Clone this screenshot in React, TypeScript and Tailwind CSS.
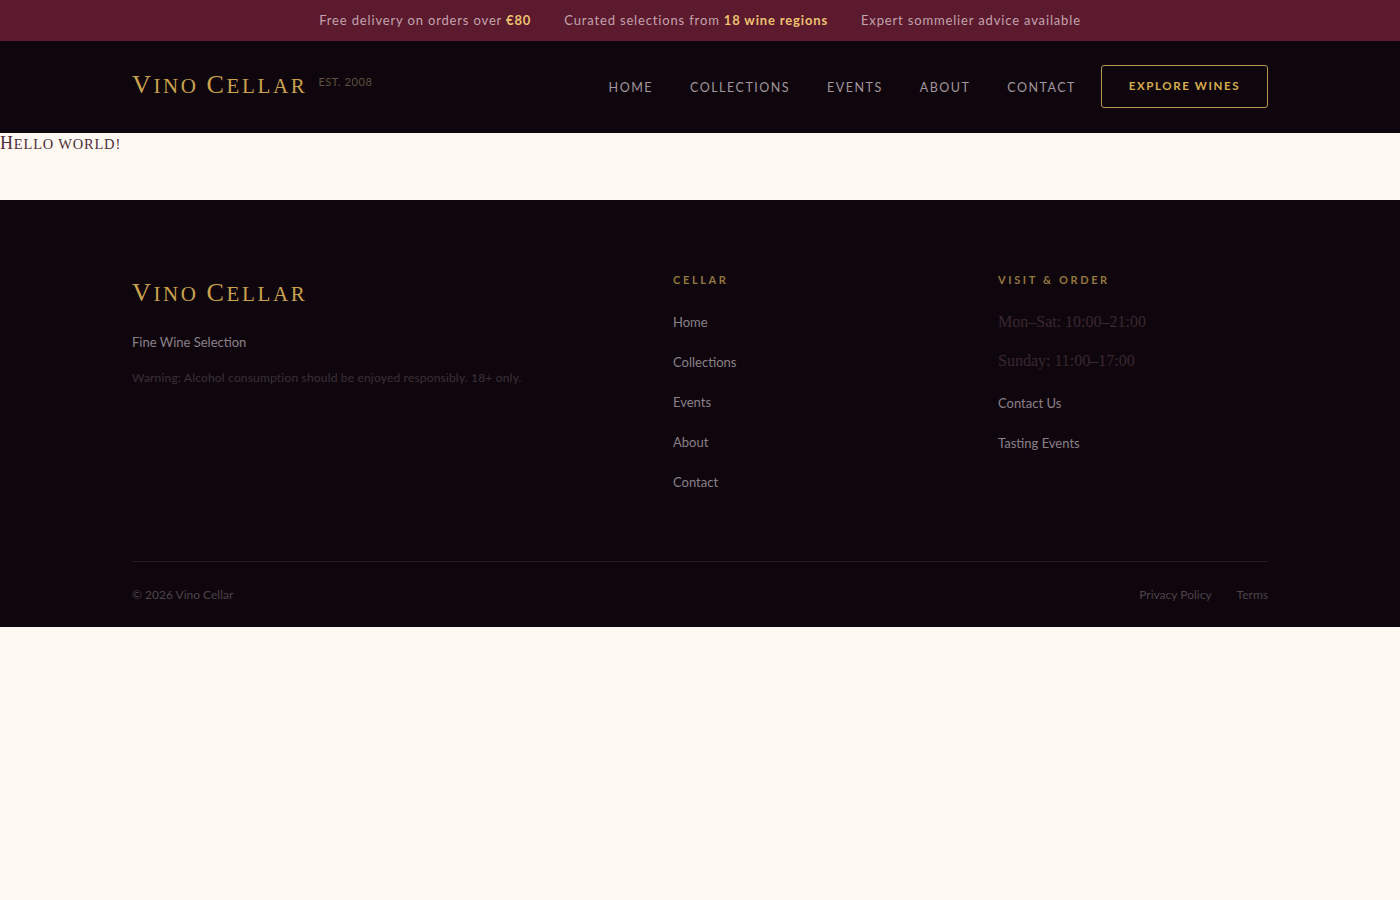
import React from "react";

const sans = { fontFamily: "Lato, 'Open Sans', sans-serif" };
const serif = { fontFamily: "'Liberation Serif', 'DejaVu Serif', serif" };

function Logo() {
  return (
    <span
      className="text-[#c9a24e] tracking-[0.165em] leading-none whitespace-nowrap"
      style={serif}
    >
      <span className="text-[26px]">V</span>
      <span className="text-[21px]">INO </span>
      <span className="text-[26px]">C</span>
      <span className="text-[21px]">ELLAR</span>
    </span>
  );
}

export default function App() {
  const navItems = ["HOME", "COLLECTIONS", "EVENTS", "ABOUT", "CONTACT"];
  return (
    <div className="min-h-[900px] bg-[#fdf8f2]" style={sans}>
      {/* Top bar */}
      <div className="h-[41px] bg-[#5b1a2e] flex items-center justify-center gap-[33px] text-[13px] tracking-[0.065em] text-[#c3a3ad] pt-[1px]">
        <span>
          Free delivery on orders over <b className="text-[#ecc171] font-bold">€80</b>
        </span>
        <span>
          Curated selections from <b className="text-[#ecc171] font-bold">18 wine regions</b>
        </span>
        <span>Expert sommelier advice available</span>
      </div>

      {/* Header */}
      <header className="bg-[#0f060d] h-[92px]">
        <div className="max-w-[1200px] mx-auto px-8 h-full flex items-center justify-between">
          <div className="flex items-start gap-[11px] -mt-[4px]">
            <Logo />
            <span className="text-[11px] tracking-[0.05em] text-[#5e5040] mt-[2px]">EST. 2008</span>
          </div>
          <div className="flex items-center">
            <nav className="flex items-center gap-[37px] text-[12.5px] tracking-[0.12em] text-[#a1969c] pt-[2px]">
              {navItems.map((n) => (
                <span key={n}>{n}</span>
              ))}
            </nav>
            <button className="ml-[25px] w-[167px] h-[43px] -mt-[2px] border border-[#b8954a] rounded-[3px] text-[#d6ae4f] text-[11.5px] font-bold tracking-[0.14em]">
              EXPLORE WINES
            </button>
          </div>
        </div>
      </header>

      {/* Main */}
      <main className="h-[67px] bg-[#fdf8f2]">
        <div className="text-[#4f2e3b] tracking-[0.05em] leading-none pt-[1px]" style={serif}>
          <span className="text-[18px]">H</span>
          <span className="text-[14.5px]">ELLO WORLD!</span>
        </div>
      </main>

      {/* Footer */}
      <footer className="bg-[#0f060d] h-[427px]">
        <div className="max-w-[1200px] mx-auto px-8">
          <div className="grid grid-cols-[485px_269px_1fr] gap-14 pt-[72px] h-[361px]">
            <div className="flex flex-col">
              <div className="mt-[8px]">
                <Logo />
              </div>
              <p className="mt-[25px] text-[13px] text-[#8b8088] leading-[20px]">Fine Wine Selection</p>
              <p className="mt-[18px] text-[12px] tracking-[0.015em] text-[#3b3036] leading-[16px]">
                Warning: Alcohol consumption should be enjoyed responsibly. 18+ only.
              </p>
            </div>
            <div className="flex flex-col">
              <h4 className="text-[11px] font-bold tracking-[0.24em] text-[#94773f] leading-[16px]">CELLAR</h4>
              <ul className="mt-[24px] flex flex-col gap-[20px] text-[13px] text-[#8b8088] leading-[20px]">
                <li>Home</li>
                <li>Collections</li>
                <li>Events</li>
                <li>About</li>
                <li>Contact</li>
              </ul>
            </div>
            <div className="flex flex-col">
              <h4 className="text-[11px] font-bold tracking-[0.24em] text-[#94773f] leading-[16px]">VISIT &amp; ORDER</h4>
              <div className="mt-[23px] flex flex-col gap-[17px] text-[16px] text-[#3a2631] leading-[22px]" style={serif}>
                <span>Mon–Sat: 10:00–21:00</span>
                <span>Sunday: 11:00–17:00</span>
              </div>
              <ul className="mt-[21px] flex flex-col gap-[20px] text-[13px] text-[#8b8088] leading-[20px]">
                <li>Contact Us</li>
                <li>Tasting Events</li>
              </ul>
            </div>
          </div>
          <div className="border-t border-[#241822] h-[66px] flex items-center justify-between text-[12px] text-[#4d434a]">
            <span>© 2026 Vino Cellar</span>
            <div className="flex gap-[25px]">
              <span>Privacy Policy</span>
              <span>Terms</span>
            </div>
          </div>
        </div>
      </footer>
    </div>
  );
}
